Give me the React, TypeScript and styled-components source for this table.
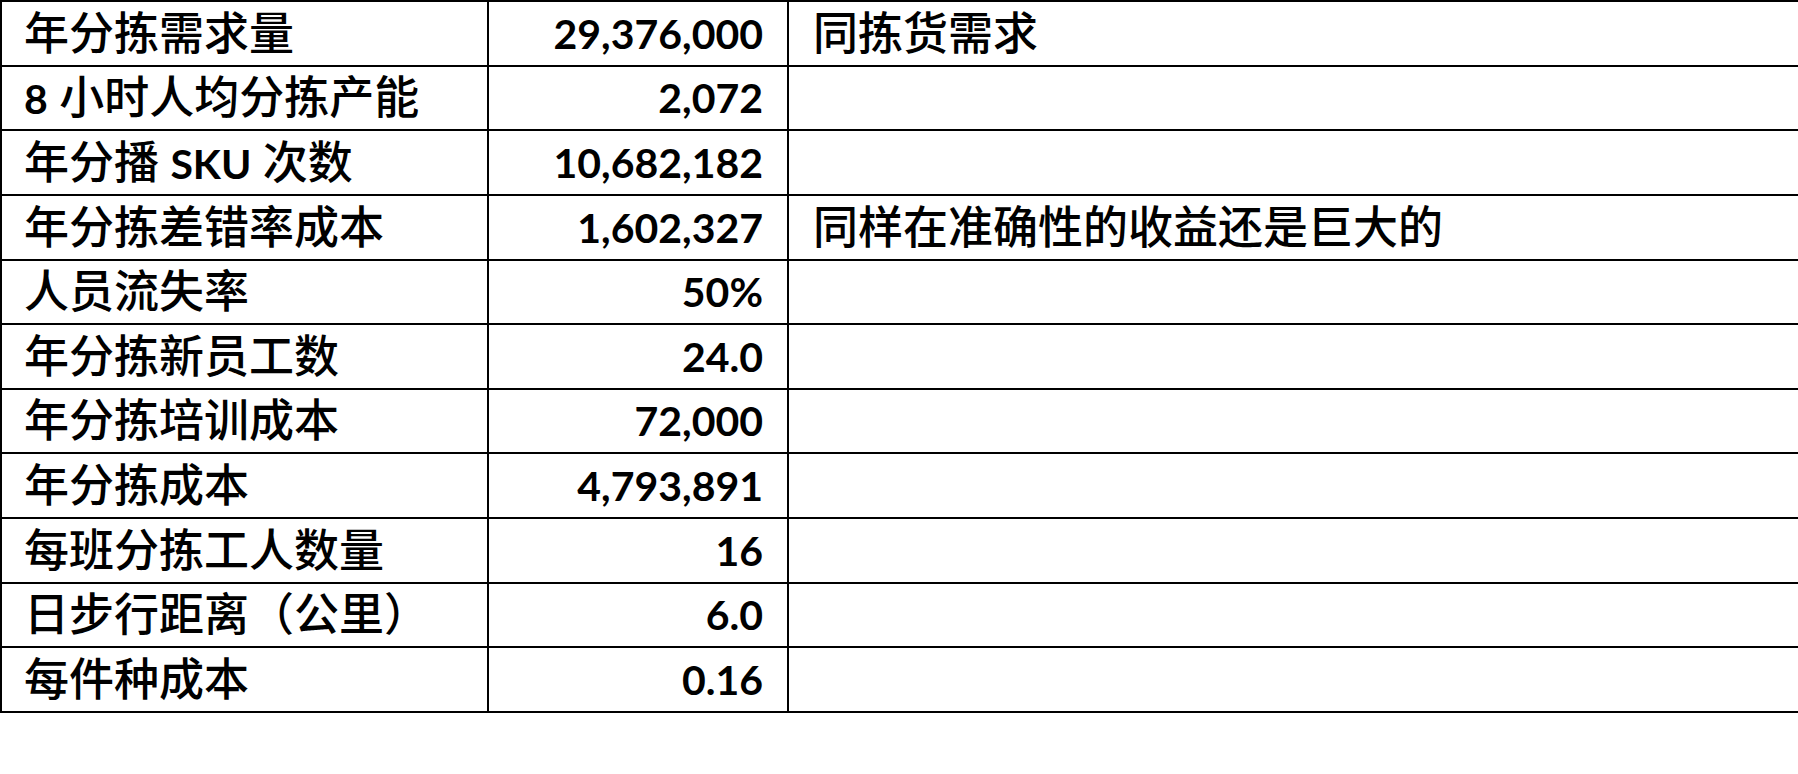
import React from 'react';
import styled, { createGlobalStyle } from 'styled-components';

const GlobalStyle = createGlobalStyle`
    html, body {
        margin: 0;
        padding: 0;
        background: #fff;
    }
    body {
        width: 1798px;
        height: 774px;
        overflow: hidden;
    }
`;

const rows: Array<iRow> = [
    { label: '年分拣需求量', value: '29,376,000', note: '同拣货需求' },
    { label: '8 小时人均分拣产能', value: '2,072' },
    { label: '年分播 SKU 次数', value: '10,682,182' },
    { label: '年分拣差错率成本', value: '1,602,327', note: '同样在准确性的收益还是巨大的' },
    { label: '人员流失率', value: '50%' },
    { label: '年分拣新员工数', value: '24.0' },
    { label: '年分拣培训成本', value: '72,000' },
    { label: '年分拣成本', value: '4,793,891' },
    { label: '每班分拣工人数量', value: '16' },
    { label: '日步行距离（公里）', value: '6.0' },
    { label: '每件种成本', value: '0.16' },
];

// latin runs inside a label get the number font and size
const renderMixed = (text: string) => {
    const parts = text.split(/([A-Za-z0-9%.,]+)/);
    return parts.map((part, i) => {
        if (!part) {
            return null;
        }
        if (/^[A-Za-z0-9%.,]+$/.test(part)) {
            return <Latin key={i}>{part}</Latin>;
        }
        return <React.Fragment key={i}>{part}</React.Fragment>;
    });
};

export default function App() {
    return <>
        <GlobalStyle />
        <Sheet>
            {rows.map((row, index) => (
                <React.Fragment key={index}>
                    <LabelCell><Text>{renderMixed(row.label)}</Text></LabelCell>
                    <ValueCell><Text>{row.value}</Text></ValueCell>
                    <NoteCell><Text>{row.note}</Text></NoteCell>
                </React.Fragment>
            ))}
        </Sheet>
    </>;
}

const Sheet = styled.div`
    display: grid;
    grid-template-columns: 487px 300px 1fr;
    grid-auto-rows: 64.64px;
    width: 1798px;
    border-top: 2px solid #000;
    border-left: 2px solid #000;
    box-sizing: border-box;
    color: #000;
`;

const Cell = styled.div`
    display: flex;
    align-items: flex-end;
    box-sizing: border-box;
    border-bottom: 2px solid #000;
    border-right: 2px solid #000;
    padding-bottom: 9px;
    white-space: pre;
    overflow: hidden;
    font-family: "Lato", "Noto Sans CJK SC", sans-serif;
    font-weight: 500;
    font-size: 45px;
    line-height: 1;
`;

const Text = styled.span`
    white-space: pre;
`;

const LabelCell = styled(Cell)`
    padding-left: 22px;
`;

const ValueCell = styled(Cell)`
    justify-content: flex-end;
    padding-right: 24px;
    padding-bottom: 11px;
    font-size: 41px;
    font-weight: 700;
`;

const NoteCell = styled(Cell)`
    border-right: none;
    padding-left: 24px;
`;

const Latin = styled.span`
    font-family: "Lato", sans-serif;
    font-size: 41px;
    font-weight: 700;
`;

interface iRow {
    label: string;
    value: string;
    note?: string;
}
